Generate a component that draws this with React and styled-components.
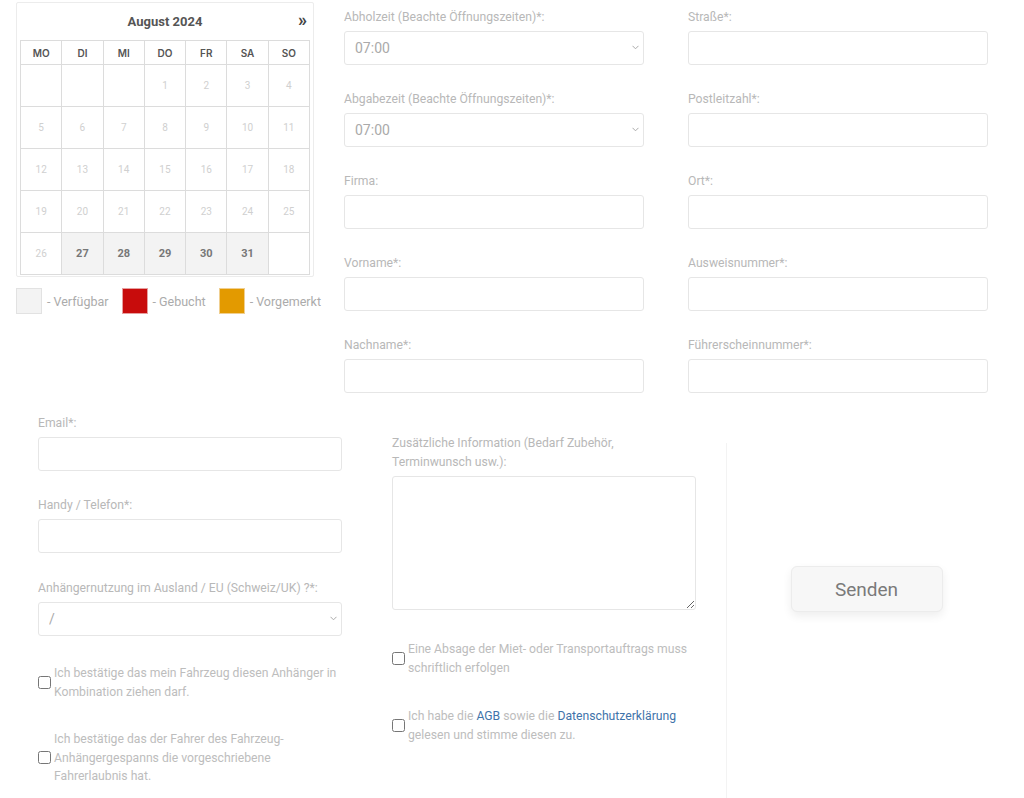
import styled, { createGlobalStyle } from "styled-components";

const GlobalStyle = createGlobalStyle`
  body {
    margin: 0;
    background: #ffffff;
    font-family: Roboto, "Liberation Sans", Arial, sans-serif;
  }
  * { box-sizing: border-box; }
`;

const Page = styled.div`
  width: 1024px;
  height: 798px;
  overflow: hidden;
  background: #fff;
`;

const TopSection = styled.div`
  display: flex;
  align-items: flex-start;
  padding: 2px 0 0 16px;
`;

const CalendarColumn = styled.div`
  width: 298px;
  display: flex;
  flex-direction: column;
`;

const CalendarBox = styled.div`
  border: 1px solid #ececec;
  border-radius: 2px;
  padding: 0 3px 3px 3px;
  height: 275px;
`;

const CalendarTitle = styled.div`
  height: 37px;
  display: flex;
  align-items: center;
  justify-content: center;
  position: relative;
  font-size: 13px;
  font-weight: 700;
  color: #555;
`;

const NextArrow = styled.span`
  position: absolute;
  right: 3px;
  top: 8px;
  font-size: 18px;
  font-weight: 700;
  color: #444;
  line-height: 18px;
`;

const DayTable = styled.div`
  display: grid;
  grid-template-columns: repeat(7, 1fr);
  grid-template-rows: 24px repeat(5, 42px);
  border-top: 1px solid #dcdcdc;
  border-left: 1px solid #dcdcdc;
`;

const HeadCell = styled.div`
  display: flex;
  align-items: center;
  justify-content: center;
  border-right: 1px solid #dcdcdc;
  border-bottom: 1px solid #dcdcdc;
  font-family: Inter, "Noto Sans", sans-serif;
  font-size: 10px;
  font-weight: 600;
  color: #555;
`;

const DayCell = styled.div`
  display: flex;
  align-items: center;
  justify-content: center;
  border-right: 1px solid #dcdcdc;
  border-bottom: 1px solid #dcdcdc;
  font-size: ${(p) => (p.$free ? "11px" : "10px")};
  font-weight: ${(p) => (p.$free ? 700 : 400)};
  color: ${(p) => (p.$free ? "#777" : "#d0d0d0")};
  background: ${(p) => (p.$free ? "#f3f3f3" : "#fff")};
`;

const Legend = styled.div`
  display: flex;
  align-items: center;
  margin-top: 11px;
  font-size: 12.5px;
  color: #ababab;
  white-space: nowrap;
`;

const Swatch = styled.span`
  width: 26px;
  height: 26px;
  flex-shrink: 0;
  background: ${(p) => p.$color};
  border: 1px solid ${(p) => p.$border};
  margin-right: 5px;
`;

const LegendText = styled.span`
  margin-right: 13px;
`;

const FieldColumn = styled.div`
  width: ${(p) => p.$width || 300}px;
  margin-left: ${(p) => p.$offset || 0}px;
  padding-top: ${(p) => p.$top || 0}px;
  display: flex;
  flex-direction: column;
  gap: 25px;
`;

const Field = styled.div`
  display: flex;
  flex-direction: column;
  margin-top: ${(p) => p.$gap || 0}px;
`;

const Label = styled.label`
  font-size: 12.2px;
  line-height: 19px;
  color: #b8b8b8;
  margin-bottom: 4px;
  max-width: ${(p) => p.$max || "none"};
`;

const TextInput = styled.input`
  height: 34px;
  width: 100%;
  border: 1px solid #e6e6e6;
  border-radius: 3px;
  background: #fff;
  outline: none;
`;

const Select = styled.select`
  height: 34px;
  width: 100%;
  border: 1px solid #e6e6e6;
  border-radius: 3px;
  background: #fff;
  font-family: Roboto, "Liberation Sans", sans-serif;
  font-size: 14px;
  color: #aaa;
  padding: 0 10px;
  appearance: none;
`;

const SelectWrap = styled.div`
  position: relative;
`;

const Chevron = styled.svg`
  position: absolute;
  right: 5px;
  top: 14px;
  width: 7px;
  height: 5px;
  pointer-events: none;
`;

const TextArea = styled.textarea`
  height: 134px;
  width: 100%;
  border: 1px solid #e6e6e6;
  border-radius: 3px;
  resize: vertical;
  outline: none;
`;

const BottomSection = styled.div`
  display: flex;
  align-items: flex-start;
  padding: 21px 0 0 38px;
`;

const CheckRow = styled.label`
  display: flex;
  align-items: center;
  margin-top: ${(p) => p.$gap}px;
`;

const Box = styled.input`
  width: 13px;
  height: 13px;
  margin: 0 3px 0 0;
  flex-shrink: 0;
  accent-color: #777;
`;

const CheckText = styled.span`
  font-size: 12.2px;
  line-height: 18.5px;
  color: #bdbdbd;
`;

const Link = styled.a`
  color: #3f73aa;
  text-decoration: none;
`;

const StackColumn = styled.div`
  width: 304px;
  margin-left: ${(p) => p.$offset || 0}px;
  padding-top: ${(p) => p.$top || 0}px;
  display: flex;
  flex-direction: column;
`;

const ActionColumn = styled.div`
  margin-left: 30px;
  margin-top: 29px;
  width: 280px;
  height: 400px;
  border-left: 1px solid #f3f3f3;
  display: flex;
  justify-content: center;
  padding-top: 123px;
`;

const SendButton = styled.button`
  width: 152px;
  height: 46px;
  background: #f7f7f7;
  border: 1px solid #ececec;
  border-radius: 6px;
  box-shadow: 0 4px 10px rgba(0, 0, 0, 0.07);
  font-family: Roboto, "Liberation Sans", sans-serif;
  font-size: 19px;
  color: #7a7a7a;
`;

const heads = ["MO", "DI", "MI", "DO", "FR", "SA", "SO"];
const days = [null, null, null, ...Array.from({ length: 31 }, (_, i) => i + 1), null];

const middleFields = [
  { label: "Abholzeit (Beachte Öffnungszeiten)*:", select: "07:00" },
  { label: "Abgabezeit (Beachte Öffnungszeiten)*:", select: "07:00" },
  { label: "Firma:" },
  { label: "Vorname*:" },
  { label: "Nachname*:" },
];

const rightFields = [
  { label: "Straße*:" },
  { label: "Postleitzahl*:" },
  { label: "Ort*:" },
  { label: "Ausweisnummer*:" },
  { label: "Führerscheinnummer*:" },
];

function SelectBox({ value }) {
  return (
    <SelectWrap>
      <Select defaultValue={value}>
        <option>{value}</option>
      </Select>
      <Chevron viewBox="0 0 7 5">
        <path d="M0.5 0.8 L3.5 3.8 L6.5 0.8" fill="none" stroke="#aaa" strokeWidth="1" />
      </Chevron>
    </SelectWrap>
  );
}

function FormField({ label, select, gap }) {
  return (
    <Field $gap={gap}>
      <Label>{label}</Label>
      {select ? <SelectBox value={select} /> : <TextInput type="text" />}
    </Field>
  );
}

export default function App() {
  return (
    <Page>
      <GlobalStyle />
      <TopSection>
        <CalendarColumn>
          <CalendarBox>
            <CalendarTitle>
              August 2024
              <NextArrow>»</NextArrow>
            </CalendarTitle>
            <DayTable>
              {heads.map((h) => (
                <HeadCell key={h}>{h}</HeadCell>
              ))}
              {days.map((d, i) => (
                <DayCell key={i} $free={d >= 27}>
                  {d}
                </DayCell>
              ))}
            </DayTable>
          </CalendarBox>
          <Legend>
            <Swatch $color="#f3f3f3" $border="#e2e2e2" />
            <LegendText>- Verfügbar</LegendText>
            <Swatch $color="#c80c0c" $border="#e6a0a0" />
            <LegendText>- Gebucht</LegendText>
            <Swatch $color="#e39a00" $border="#f0cf90" />
            <LegendText>- Vorgemerkt</LegendText>
          </Legend>
        </CalendarColumn>

        <FieldColumn $offset={30} $top={6}>
          {middleFields.map((f) => (
            <FormField key={f.label} {...f} />
          ))}
        </FieldColumn>

        <FieldColumn $offset={44} $top={6}>
          {rightFields.map((f) => (
            <FormField key={f.label} {...f} />
          ))}
        </FieldColumn>
      </TopSection>

      <BottomSection>
        <StackColumn>
          <FormField label="Email*:" />
          <FormField label="Handy / Telefon*:" gap={25} />
          <FormField label="Anhängernutzung im Ausland / EU (Schweiz/UK) ?*:" select="/" gap={26} />
          <CheckRow $gap={28}>
            <Box type="checkbox" />
            <CheckText>
              Ich bestätige das mein Fahrzeug diesen Anhänger in Kombination ziehen darf.
            </CheckText>
          </CheckRow>
          <CheckRow $gap={29}>
            <Box type="checkbox" />
            <CheckText>
              Ich bestätige das der Fahrer des Fahrzeug-Anhängergespanns die vorgeschriebene
              Fahrerlaubnis hat.
            </CheckText>
          </CheckRow>
        </StackColumn>

        <StackColumn $offset={50} $top={20}>
          <Field>
            <Label $max="270px">Zusätzliche Information (Bedarf Zubehör, Terminwunsch usw.):</Label>
            <TextArea />
          </Field>
          <CheckRow $gap={30}>
            <Box type="checkbox" />
            <CheckText>Eine Absage der Miet- oder Transportauftrags muss schriftlich erfolgen</CheckText>
          </CheckRow>
          <CheckRow $gap={30}>
            <Box type="checkbox" />
            <CheckText>
              Ich habe die <Link href="#">AGB</Link> sowie die{" "}
              <Link href="#">Datenschutzerklärung</Link> gelesen und stimme diesen zu.
            </CheckText>
          </CheckRow>
        </StackColumn>

        <ActionColumn>
          <SendButton>Senden</SendButton>
        </ActionColumn>
      </BottomSection>
    </Page>
  );
}
